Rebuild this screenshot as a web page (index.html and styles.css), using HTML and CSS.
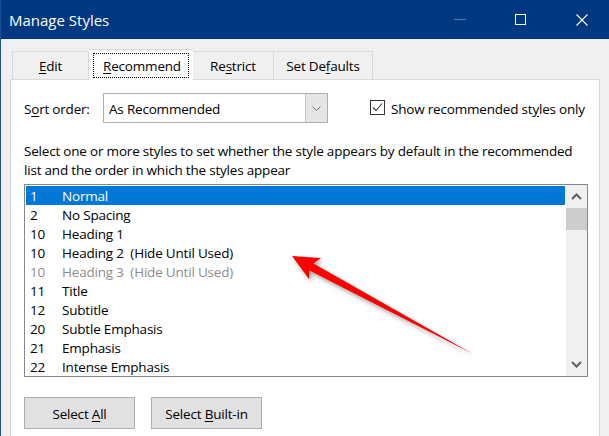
FILE: index.html
```html
<!DOCTYPE html>
<html>
<head>
<meta charset="utf-8">
<link rel="stylesheet" href="styles.css">
</head>
<body>
<div class="window">
  <div class="titlebar">
    <span class="title">Manage Styles</span>
    <span class="ctl"><svg width="12" height="1" viewBox="0 0 12 1"><rect width="12" height="1" fill="#5b77a6"/></svg></span>
    <span class="ctl"><svg width="11" height="11" viewBox="0 0 11 11"><rect x="0.5" y="0.5" width="10" height="10" fill="none" stroke="#fff"/></svg></span>
    <span class="ctl"><svg width="12" height="12" viewBox="0 0 12 12"><path d="M0.5 0.5L11.5 11.5M11.5 0.5L0.5 11.5" stroke="#fff" stroke-width="1.1"/></svg></span>
  </div>
  <div class="content">
    <div class="tabs">
      <div class="tab t-edit"><span><u>E</u>dit</span></div>
      <div class="tab sel"><span class="focus"><span><u>R</u>ecommend</span></span></div>
      <div class="tab t-restrict"><span>Re<u>s</u>trict</span></div>
      <div class="tab t-defaults"><span>Set De<u>f</u>aults</span></div>
    </div>
    <div class="panel">
      <div class="sortrow">
        <span class="sortlabel">S<u>o</u>rt order:</span>
        <div class="combo">
          <span class="combo-val">As Recommended</span>
          <span class="combo-btn"><svg width="9" height="5" viewBox="0 0 9 5"><path d="M0.5 0.5L4.5 4.5L8.5 0.5" fill="none" stroke="#6d6d6d" stroke-width="1"/></svg></span>
        </div>
        <div class="check">
          <span class="box"><svg width="13" height="13" viewBox="0 0 13 13"><path d="M2 6.5L5 9.5L11 2.5" fill="none" stroke="#333" stroke-width="1.1"/></svg></span>
          <span>Show recommended st<u>y</u>les only</span>
        </div>
      </div>
      <p class="desc">Select one or more styles to set whether the style appears by default in the recommended<br>list and the order in which the styles appear</p>
      <div class="list">
        <div class="rows">
          <div class="row selected"><span class="num">1</span><span>Normal</span></div>
          <div class="row"><span class="num">2</span><span>No Spacing</span></div>
          <div class="row"><span class="num">10</span><span>Heading 1</span></div>
          <div class="row"><span class="num">10</span><span>Heading 2&nbsp;&nbsp;(Hide Until Used)</span></div>
          <div class="row dim"><span class="num">10</span><span>Heading 3&nbsp;&nbsp;(Hide Until Used)</span></div>
          <div class="row"><span class="num">11</span><span>Title</span></div>
          <div class="row"><span class="num">12</span><span>Subtitle</span></div>
          <div class="row"><span class="num">20</span><span>Subtle Emphasis</span></div>
          <div class="row"><span class="num">21</span><span>Emphasis</span></div>
          <div class="row"><span class="num">22</span><span>Intense Emphasis</span></div>
        </div>
        <div class="scroll">
          <span class="sbtn"><svg width="11" height="7" viewBox="0 0 11 7"><path d="M1 6L5.5 1.5L10 6" fill="none" stroke="#606060" stroke-width="2"/></svg></span>
          <span class="thumb"></span>
          <span class="sfill"></span>
          <span class="sbtn"><svg width="11" height="7" viewBox="0 0 11 7"><path d="M1 1L5.5 5.5L10 1" fill="none" stroke="#606060" stroke-width="2"/></svg></span>
        </div>
      </div>
      <div class="buttons">
        <span class="btn"><span>Select <u>A</u>ll</span></span>
        <span class="btn"><span>Select <u>B</u>uilt-in</span></span>
      </div>
    </div>
  </div>
</div>
<svg class="arrow" width="609" height="436" viewBox="0 0 609 436">
  <polygon points="292,256 321,258 313.5,263.5 473,354 309.5,270.5 309,279" fill="#ff0000"/>
</svg>
</body>
</html>
```

FILE: styles.css
```css
* { box-sizing: border-box; }
html, body { margin: 0; padding: 0; }
body {
  width: 609px;
  height: 436px;
  overflow: hidden;
  background: #f0f0f0;
  font-family: "Open Sans", "Noto Sans", sans-serif;
  font-size: 13.5px;
  letter-spacing: -0.2px;
  color: #000;
}
u { text-decoration-thickness: 1px; text-underline-offset: 2px; }
.window {
  height: 436px;
  border-left: 1px solid #1d4d8f;
}
.titlebar {
  height: 39px;
  background: #003882;
  display: flex;
  align-items: center;
  color: #fff;
  margin-right: -3px;
}
.title { flex: 1; padding-left: 8px; font-size: 15px; letter-spacing: 0; }
.ctl {
  width: 61px;
  height: 39px;
  display: flex;
  align-items: center;
  justify-content: center;
}
.ctl svg { display: block; }
.content { padding-left: 9px; }
.tabs {
  display: flex;
  margin-top: 12px;
  padding-left: 2px;
  height: 28px;
  position: relative;
  z-index: 1;
}
.tab {
  height: 28px;
  border: 1px solid #d9d9d9;
  border-bottom: none;
  background: #f0f0f0;
  display: flex;
  align-items: center;
  justify-content: center;
  padding-top: 1px;
}
.t-edit { width: 77px; }
.t-restrict { width: 81px; border-left: none; }
.t-defaults { width: 99px; border-left: none; }
.tab.sel {
  width: 104px;
  height: 31px;
  margin-top: -2px;
  background: #fff;
  align-items: flex-start;
  justify-content: flex-start;
  padding: 3px 0 0 4px;
  border-left: none;
  border-right: none;
  border-top: 1px solid #d9d9d9;
}
.focus {
  width: 96px;
  height: 25px;
  border: 1px dotted #000;
  display: flex;
  align-items: center;
  justify-content: center;
  padding: 1px 0 0 2px;
}
.panel {
  width: 590px;
  height: 360px;
  background: #fff;
  border: 1px solid #d9d9d9;
  padding: 13px 0 0 13px;
}
.sortrow {
  display: flex;
  align-items: center;
  height: 30px;
}
.sortlabel { width: 79px; padding-top: 1px; }
.combo {
  width: 225px;
  height: 30px;
  border: 1px solid #adadad;
  display: flex;
  align-items: center;
}
.combo-val { flex: 1; padding: 1px 0 0 5px; }
.combo-btn {
  width: 22px;
  height: 28px;
  background: #e5e5e5;
  border-left: 1px solid #c8c8c8;
  display: flex;
  align-items: center;
  justify-content: center;
}
.check {
  margin-left: 42px;
  display: flex;
  align-items: center;
  gap: 6px;
  padding-top: 1px;
}
.box {
  width: 15px;
  height: 15px;
  border: 1px solid #333;
  display: flex;
  align-items: center;
  justify-content: center;
  margin-top: -3px;
}
.box svg { display: block; }
.desc {
  margin: 19px 0 0;
  line-height: 19px;
  white-space: nowrap;
}
.list {
  margin-top: 4px;
  width: 564px;
  height: 193px;
  border: 1px solid #828790;
  display: flex;
}
.rows {
  width: 541px;
  padding: 1px;
}
.row {
  height: 19px;
  line-height: 19px;
  display: flex;
  padding: 1px 0 0 4px;
  white-space: nowrap;
}
.row .num { width: 32px; }
.row.selected { background: #0078d7; color: #fff; }
.row.dim { color: #8d8d8d; }
.scroll {
  width: 21px;
  background: #f0f0f0;
  display: flex;
  flex-direction: column;
}
.sbtn {
  height: 23px;
  display: flex;
  align-items: center;
  justify-content: center;
}
.thumb { height: 22px; background: #cdcdcd; }
.sfill { flex: 1; }
.buttons {
  display: flex;
  gap: 16px;
  margin-top: 20px;
}
.btn {
  width: 111px;
  height: 32px;
  background: #e1e1e1;
  border: 1px solid #adadad;
  display: flex;
  align-items: center;
  justify-content: center;
  padding-top: 1px;
}
.arrow {
  position: absolute;
  left: 0;
  top: 0;
  pointer-events: none;
  filter: drop-shadow(2px 3px 2px rgba(0,0,0,0.35));
}
```
